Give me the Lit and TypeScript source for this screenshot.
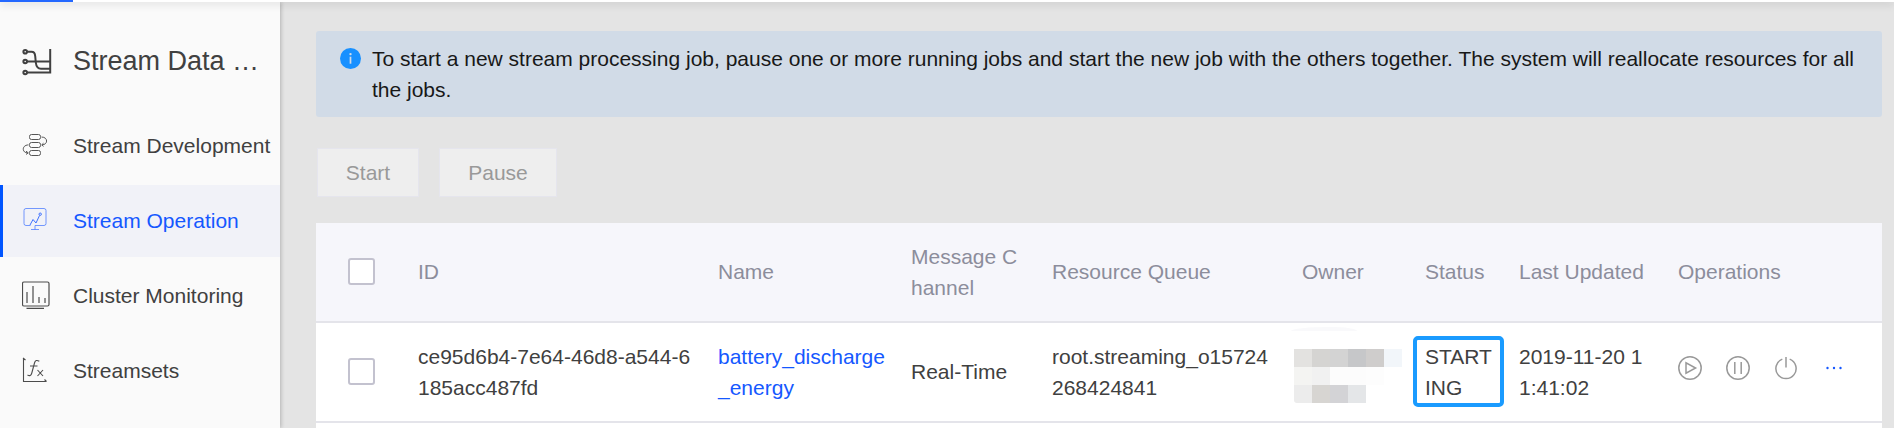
import { LitElement, html, css, svg } from "lit";
import { customElement } from "lit/decorators.js";
import { classMap } from "lit/directives/class-map.js";

const icons = {
  stream: svg`<svg width="30" height="28" viewBox="0 0 30 28" fill="none" stroke="#404040" stroke-width="2">
    <circle cx="3.2" cy="3.7" r="1.8"/><circle cx="3.2" cy="13.5" r="1.8"/><circle cx="3.2" cy="24.5" r="1.8"/>
    <path d="M5 3.7H9.5C12 3.7 13 5 13.2 8L13.8 14.5C14.3 19 16 20.7 19 20.7H27.8M5 13.5H27.8M5 24.5H28.2V1"/></svg>`,
  dev: svg`<svg width="26" height="24" viewBox="0 0 26 24" fill="none" stroke="#555" stroke-width="1">
    <rect x="7.5" y="1.5" width="11" height="5" rx="2"/><rect x="7.5" y="9.5" width="11" height="5" rx="2"/><rect x="7.5" y="17.5" width="11" height="5" rx="2"/>
    <path d="M19.5 4C26.2 4 26.2 11.7 20 11.9M21.5 10.2L19.7 11.9L21.5 13.4M6.5 11.9C-.3 12-.3 19.7 5.5 19.9M4 18.2L6.3 19.9L4 21.4"/></svg>`,
  operation: svg`<svg width="26" height="23" viewBox="-1.5 0 26 23" fill="none" stroke="#3d70ff" stroke-width="1">
    <path d="M7 17.5H2.5Q.5 17.5.5 15.5V2.5Q.5.5 2.5.5H20.5Q22.5.5 22.5 2.5V15.5Q22.5 17.5 20.5 17.5H11.5V21.5M7.5 21.5H15.5" stroke-opacity=".7"/>
    <path d="M6.5 17L9.5 11.5L12.5 15L16 7.5"/><circle cx="16.7" cy="6.2" r="1.2"/></svg>`,
  cluster: svg`<svg width="29" height="28" viewBox="0.8 0 29 28" fill="none" stroke="#4c4c4c" stroke-width="1.2">
    <rect x="1.3" y="1" width="26.5" height="24" rx="1.5"/><path d="M5.8 11V22M11.8 5V22M17.8 16V22M23.8 17V22M5.3 27.3H22.8"/></svg>`,
  sets: svg`<svg width="26" height="26" viewBox="0 0 26 26" fill="none" stroke="#4c4c4c" stroke-width="1.1">
    <path d="M1.5 1V24.5H24.5M1 1L3.5 3M22.5 22.5L24.5 24.5M17.3 4.3Q13.5 2 12.5 6L9.8 16Q8.8 20 5.5 18M8 9H15.5M15.5 13L21 19M21 13L15.5 19"/></svg>`,
  info: svg`<svg width="21" height="21" viewBox="0 0 21 21"><circle cx="10.5" cy="10.5" r="10.5" fill="#1890ff"/>
    <path d="M10.5 8.7V15.7" stroke="#d1dbe7" stroke-width="1.7"/><circle cx="10.5" cy="6.1" r="1.2" fill="#d1dbe7"/></svg>`,
  play: svg`<svg width="24" height="24" viewBox="0 0 24 24" fill="none" stroke="#999" stroke-width="1.5"><circle cx="12" cy="12" r="11.2"/><path d="M8 6.8V17.2L17.6 12Z"/></svg>`,
  pause: svg`<svg width="24" height="24" viewBox="0 0 24 24" fill="none" stroke="#999" stroke-width="1.5"><circle cx="12" cy="12" r="11.2"/><path d="M8.8 6V18M15.2 6V18"/></svg>`,
  power: svg`<svg width="24" height="24" viewBox="0 0 24 24" fill="none" stroke="#999" stroke-width="1.5"><path d="M8.3 3.1A10.1 10.1 0 1 0 15.7 3.1M12 1V11.5"/></svg>`,
  more: svg`<svg width="16" height="4" viewBox="0 0 16 4" fill="#1558ff"><circle cx="1.5" cy="2" r="1.2"/><circle cx="8" cy="2" r="1.2"/><circle cx="14.5" cy="2" r="1.2"/></svg>`,
};

const menu = [
  { icon: icons.dev, label: "Stream Development" },
  { icon: icons.operation, label: "Stream Operation", active: true },
  { icon: icons.cluster, label: "Cluster Monitoring" },
  { icon: icons.sets, label: "Streamsets" },
];

const headers = ["ID", "Name", "Message C\nhannel", "Resource Queue", "Owner", "Status", "Last Updated", "Operations"];

const mask = [
  "#e3e2e0", "#d5d4d2", "#d3d3d3", "#c6c7c9", "#cfcdcc", "#f2f6fa",
  "#f4f4f2", "#f1f1f1", "#fcfcfc", "#fcfcfc", "#fdfdfd", "#fff",
  "#ececec", "#d7d5d2", "#d3d3d6", "#e4e6e8", "#fff", "#fff",
];

@customElement("app-root")
export class AppRoot extends LitElement {
  static styles = css`
    :host { display: flex; flex-direction: column; height: 428px; overflow: hidden; background: #e4e4e4;
      font-family: "Liberation Sans", Arial, sans-serif; font-size: 21px; line-height: 31px; color: #404040; }
    * { box-sizing: border-box; }
    svg { display: block; flex: none; }
    .topbar { flex: none; height: 2px; background: #fff; box-shadow: 0 1px 9px rgba(0,0,0,.3); z-index: 2; }
    .progress { width: 73px; height: 2px; background: #2468ff; }
    .body { flex: 1; display: flex; min-height: 0; overflow: hidden; }
    .side { flex: none; width: 280px; background: #fafafa; box-shadow: 1px 0 4px rgba(0,0,0,.22); }
    .title { display: flex; align-items: center; height: 108px; padding: 10px 0 0 22px; font-size: 27px; }
    .title svg { margin-top: 2px; }
    .item { display: flex; align-items: center; height: 72px; margin-bottom: 3px; border-left: 3px solid transparent; padding-left: 18px; white-space: nowrap; }
    .item.active { background: #f1f2f8; border-color: #0055ff; color: #1558ff; }
    .ico { flex: none; width: 51px; display: flex; }
    .item .ico { width: 52px; }
    .item .ico svg { margin: -3px 0 0 1px; }
    .label { margin-top: -2px; }
    .main { flex: 1; min-width: 0; padding: 29px 12px 0 36px; }
    .alert { display: flex; height: 86px; padding: 12px 24px; background: #d1dbe7; border-radius: 3px; color: #181818; white-space: pre; }
    .alert svg { margin: 5px 11px 0 0; }
    .buttons { display: flex; gap: 20px; padding: 31px 1px 26px; }
    .btn { height: 49px; border: 1px solid #e5e5ed; background: #eee; color: #999; display: flex; align-items: center; justify-content: center; width: 102px; padding-bottom: 1px; }
    .btn.wide { width: 118px; }
    .row { display: grid; grid-template-columns: 90px 300px 193px 141px 250px 123px 94px 159px 1fr; height: 100px;
      background: #fff; border-bottom: 2px solid #e4e4ea; align-items: center; }
    .head { background: #f6f6fb; color: #8c8d9b; }
    .cell { padding-left: 12px; margin-top: -1px; white-space: pre; position: relative; }
    .box { width: 27px; height: 27px; margin: -1px 0 0 32px; border: 2px solid #c3c2cf; border-radius: 3px; background: #fff; }
    .link { color: #1558ff; }
    .owner { position: relative; }
    .mask { display: grid; grid-template-columns: repeat(6, 18px); grid-auto-rows: 18px; margin: 8px 0 0 4px; border-bottom-left-radius: 3px; overflow: hidden; }
    .smudge { position: absolute; left: 1px; top: -14px; width: 66px; height: 4px; background: #f9f9fb; border-radius: 60% 40% 0 0 / 100% 100% 0 0; }
    .mark { position: absolute; left: 0; top: -5px; width: 91px; height: 71px; border: 4px solid #1a9bff; border-radius: 5px; }
    .ops { display: flex; align-items: center; gap: 24px; padding-left: 12px; margin-top: -8px; }
    .ops svg:last-child { margin-left: 4px; }
  `;

  render() {
    return html`
      <div class="topbar"><div class="progress"></div></div>
      <div class="body">
        <nav class="side">
          <div class="title"><span class="ico">${icons.stream}</span><span>Stream Data …</span></div>
          ${menu.map((m) => html`<div class=${classMap({ item: true, active: !!m.active })}>
            <span class="ico">${m.icon}</span><span class="label">${m.label}</span></div>`)}
        </nav>
        <main class="main">
          <div class="alert">${icons.info}<span>To start a new stream processing job, pause one or more running jobs and start the new job with the others together. The system will reallocate resources for all${"\n"}the jobs.</span></div>
          <div class="buttons"><div class="btn">Start</div><div class="btn wide">Pause</div></div>
          <div class="row head"><div class="box"></div>${headers.map((h) => html`<div class="cell">${h}</div>`)}</div>
          <div class="row">
            <div class="box"></div>
            <div class="cell">${"ce95d6b4-7e64-46d8-a544-6\n185acc487fd"}</div>
            <div class="cell link">${"battery_discharge\n_energy"}</div>
            <div class="cell">Real-Time</div>
            <div class="cell">${"root.streaming_o15724\n268424841"}</div>
            <div class="owner"><div class="smudge"></div><div class="mask">${mask.map((c) => html`<i style="background:${c}"></i>`)}</div></div>
            <div class="cell">${"START\nING"}<div class="mark"></div></div>
            <div class="cell">${"2019-11-20 1\n1:41:02"}</div>
            <div class="ops">${icons.play}${icons.pause}${icons.power}${icons.more}</div>
          </div>
          <div class="row"></div>
        </main>
      </div>`;
  }
}
